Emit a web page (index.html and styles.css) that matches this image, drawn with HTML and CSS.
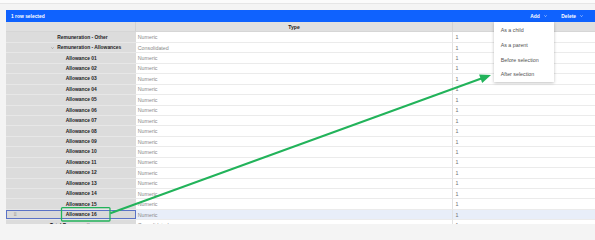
FILE: index.html
```html
<!DOCTYPE html>
<html lang="en">
<head>
<meta charset="utf-8">
<title>Hierarchy editor</title>
<link rel="stylesheet" href="styles.css">
</head>
<body>
<div class="page">
<div class="topstrip"></div>
<div class="main">
  <div class="bar">
    <span class="title">1 row selected</span>
    <span class="action add">Add <svg class="chev" viewBox="0 0 4 2.4"><polyline points="0.3,0.3 2,2 3.7,0.3"/></svg></span>
    <span class="action del">Delete <svg class="chev" viewBox="0 0 4 2.4"><polyline points="0.3,0.3 2,2 3.7,0.3"/></svg></span>
  </div>
  <div class="grid">
    <div class="row head"><div class="c lab"></div><div class="c typ">Type</div><div class="c val"></div></div>
    <div class="row"><div class="c lab l1">Remuneration - Other</div><div class="c typ">Numeric</div><div class="c val">1</div></div>
    <div class="row"><div class="c lab l1"><svg class="tchev" viewBox="0 0 4 2.4"><polyline points="0.3,0.3 2,2 3.7,0.3"/></svg>Remuneration - Allowances</div><div class="c typ">Consolidated</div><div class="c val">1</div></div>
    <div class="row"><div class="c lab l2">Allowance 01</div><div class="c typ">Numeric</div><div class="c val">1</div></div>
    <div class="row"><div class="c lab l2">Allowance 02</div><div class="c typ">Numeric</div><div class="c val">1</div></div>
    <div class="row"><div class="c lab l2">Allowance 03</div><div class="c typ">Numeric</div><div class="c val">1</div></div>
    <div class="row"><div class="c lab l2">Allowance 04</div><div class="c typ">Numeric</div><div class="c val">1</div></div>
    <div class="row"><div class="c lab l2">Allowance 05</div><div class="c typ">Numeric</div><div class="c val">1</div></div>
    <div class="row"><div class="c lab l2">Allowance 06</div><div class="c typ">Numeric</div><div class="c val">1</div></div>
    <div class="row"><div class="c lab l2">Allowance 07</div><div class="c typ">Numeric</div><div class="c val">1</div></div>
    <div class="row"><div class="c lab l2">Allowance 08</div><div class="c typ">Numeric</div><div class="c val">1</div></div>
    <div class="row"><div class="c lab l2">Allowance 09</div><div class="c typ">Numeric</div><div class="c val">1</div></div>
    <div class="row"><div class="c lab l2">Allowance 10</div><div class="c typ">Numeric</div><div class="c val">1</div></div>
    <div class="row"><div class="c lab l2">Allowance 11</div><div class="c typ">Numeric</div><div class="c val">1</div></div>
    <div class="row"><div class="c lab l2">Allowance 12</div><div class="c typ">Numeric</div><div class="c val">1</div></div>
    <div class="row"><div class="c lab l2">Allowance 13</div><div class="c typ">Numeric</div><div class="c val">1</div></div>
    <div class="row"><div class="c lab l2">Allowance 14</div><div class="c typ">Numeric</div><div class="c val">1</div></div>
    <div class="row"><div class="c lab l2">Allowance 15</div><div class="c typ">Numeric</div><div class="c val">1</div></div>
    <div class="row sel"><div class="c lab selcell"><span class="handle">⠿</span>Allowance 16</div><div class="c typ">Numeric</div><div class="c val">1</div></div>
    <div class="row"><div class="c lab l0">Total Remuneration</div><div class="c typ">Consolidated</div><div class="c val">1</div></div>
  </div>
</div>

<div class="menu">
  <div class="item">As a child</div>
  <div class="item">As a parent</div>
  <div class="item">Before selection</div>
  <div class="item">After selection</div>
</div>

<svg class="annot" viewBox="0 0 595 224" width="595" height="224">
  <rect x="61.5" y="207.6" width="48.5" height="13.4" rx="1" class="gbox"/>
  <line x1="111" y1="213" x2="482" y2="78.3" class="gline"/>
  <polygon points="491,75 482.2,83 479.1,74.5" class="ghead"/>
</svg>
</div>
</body>
</html>
```

FILE: styles.css
```css
* { box-sizing: border-box; }
html, body {
  margin: 0;
  padding: 0;
  width: 595px;
  height: 224px;
  overflow: hidden;
}
body {
  background: #f4f4f4;
  font-family: "Liberation Sans", Arial, sans-serif;
  color: #161616;
}
.page {
  position: relative;
  width: 595px;
  height: 224px;
  overflow: hidden;
}
.topstrip {
  height: 10px;
  background: #f4f4f4;
}
.topstrip::before {
  content: "";
  display: block;
  height: 3px;
  background: #fbfbfb;
  border-bottom: 1px solid #e6e6e6;
}
.main { padding-left: 6px; }

.bar {
  height: 12px;
  background: #0f62fe;
  color: #fff;
  display: flex;
  align-items: center;
  font-size: 4.9px;
  font-weight: bold;
  padding-left: 5px;
  padding-right: 12px;
}
.bar .title { flex: 1; }
.bar .action { display: flex; align-items: center; }
.bar .add { gap: 4.5px; margin-right: 14px; }
.bar .del { gap: 4px; }
.chev { width: 3px; height: 2px; fill: none; stroke: #fff; stroke-width: 0.7; }

.grid { display: flex; flex-direction: column; }
.row {
  display: grid;
  grid-template-columns: 130px 316px 1fr;
  height: 10.45px;
  flex: none;
}
.c {
  display: flex;
  align-items: center;
  border-bottom: 1px solid #ebebeb;
  white-space: nowrap;
  overflow: hidden;
}
.lab {
  background: #dcdcdc;
  border-bottom-color: #e7e7e7;
  font-size: 4.9px;
  font-weight: bold;
  color: #222;
}
.l0 { padding-left: 44px; }
.l1 { padding-left: 51.3px; }
.l2 { padding-left: 59.7px; }
.tchev {
  width: 3px; height: 2px;
  margin-left: -6.3px; margin-right: 3.3px;
  fill: none; stroke: #777; stroke-width: 0.6;
}
.typ {
  background: #fff;
  font-size: 5.3px;
  color: #8a8a8a;
  padding-left: 1.8px;
}
.val {
  background: #fff;
  border-left: 1px solid #e2e2e2;
  font-size: 5.3px;
  color: #6f6f6f;
  padding-left: 2.5px;
}
.head .c {
  background: #e0e0e0;
  border-bottom: 1px solid #d6d6d6;
  font-weight: bold;
  color: #222;
  font-size: 5.1px;
}
.head .lab { border-right: 1px solid #d2d2d2; }
.head .typ { justify-content: center; padding-left: 0; }
.head .val { border-left: 1px solid #d2d2d2; }

.sel .typ, .sel .val { background: #e8eef9; }
.selcell {
  background: #d9d9d9;
  box-shadow: inset 0 0 0 1px #5b73c6;
  padding-left: 7.5px;
}
.handle {
  display: inline-block;
  width: 52.2px;
  font-family: "DejaVu Sans", sans-serif;
  font-size: 4.5px;
  font-weight: normal;
  color: #7a7a7a;
}

.menu {
  position: absolute;
  left: 494px;
  top: 22px;
  width: 60px;
  padding-top: 0.6px;
  background: #fff;
  box-shadow: 0 1px 3px rgba(0,0,0,0.25);
}
.item {
  height: 14.8px;
  display: flex;
  align-items: center;
  padding-left: 6.7px;
  font-size: 5.3px;
  color: #525252;
}

.annot {
  position: absolute;
  left: 0;
  top: 0;
  pointer-events: none;
}
.gbox { fill: none; stroke: #22b35a; stroke-width: 1.3; }
.gline { stroke: #22b35a; stroke-width: 2; stroke-linecap: round; }
.ghead { fill: #22b35a; }
```
